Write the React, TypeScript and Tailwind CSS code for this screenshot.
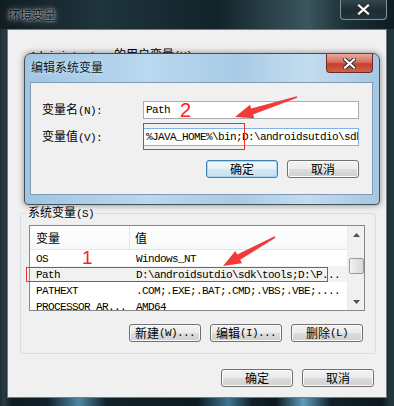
import React from "react";

// CJK runs get Noto Sans CJK at 12px, latin runs a narrow mono (6px per char, like SimSun)
function T({ s }: { s: string }) {
  const parts = s.split(/([\u3000-\u9fff]+)/);
  return (
    <>
      {parts.map((p, i) =>
        p === "" ? null : /[\u3000-\u9fff]/.test(p) ? (
          <span key={i} className="[font-family:'Noto_Sans_CJK_SC',sans-serif] text-[12px] leading-[12px]">
            {p}
          </span>
        ) : (
          <span key={i} className="[font-family:'Liberation_Mono',monospace] text-[11px] leading-[12px] tracking-[-0.6px] whitespace-pre">
            {p}
          </span>
        )
      )}
    </>
  );
}

function Btn({ label, def = false }: { label: string; def?: boolean }) {
  return (
    <div
      className={
        def
          ? "h-[18px] w-[72px] rounded-[3px] border border-[#3c7fb1] bg-[linear-gradient(#f1f8fd_0%,#e6f1f9_50%,#d6e7f4_50%,#cadeee_100%)] shadow-[inset_0_0_0_1px_#a5d5f2] flex items-center justify-center text-black"
          : "h-[18px] w-[72px] rounded-[3px] border border-[#707070] bg-[linear-gradient(#f2f2f2_0%,#ebebeb_50%,#dddddd_50%,#cfcfcf_100%)] shadow-[inset_0_0_0_1px_#fbfbfb] flex items-center justify-center text-black"
      }
    >
      <T s={label} />
    </div>
  );
}

function CloseX() {
  return (
    <svg width="13" height="11" viewBox="0 0 13 11">
      <path d="M2 1.5 L11 9.5 M11 1.5 L2 9.5" stroke="#2a2a2a" strokeWidth="4" strokeLinecap="square" />
      <path d="M2 1.5 L11 9.5 M11 1.5 L2 9.5" stroke="#ffffff" strokeWidth="2.2" strokeLinecap="square" />
    </svg>
  );
}

const rows = [
  { k: "OS", v: "Windows_NT" },
  { k: "Path", v: "D:\\androidsutdio\\sdk\\tools;D:\\P...", sel: true },
  { k: "PATHEXT", v: ".COM;.EXE;.BAT;.CMD;.VBS;.VBE;...." },
  { k: "PROCESSOR_AR...", v: "AMD64" },
];

export default function App() {
  return (
    <div className="w-[394px] h-[406px] relative overflow-hidden flex flex-col text-[12px] leading-[12px] bg-[linear-gradient(90deg,#1c2b31_0%,#2a3d44_1%,#0f1c21_3%,#10202a_12%,#4f86a3_20%,#122129_27%,#0d1a20_50%,#3f7490_58%,#11212a_64%,#0c181d_70%,#5e9cbb_77%,#122129_84%,#0d191e_97%,#24363d_99%)] text-black">
      {/* 外层窗口标题栏 */}
      <div className="h-[29px] shrink-0 flex justify-between pr-[7px] bg-[linear-gradient(90deg,#101d23,#1f343c_25%,#13232a_55%,#3b565e_78%,#1c2f36_88%,#0f1c21)]">
        <div className="pl-[8px] pt-[9px] text-[#0c0c0c] [text-shadow:0_0_2px_#dce9ed,0_0_6px_#b4c9d0]">
          <T s="环境变量" />
        </div>
        <div className="w-[47px] h-[20px] rounded-b-[4px] border border-t-0 border-[#7f9298] bg-[linear-gradient(#33464d,#1c2c32_55%,#22353b)] flex items-center justify-center">
          <CloseX />
        </div>
      </div>

      {/* 外层客户区 */}
      <div className="flex-1 mx-[7px] mb-[8px] bg-[#f0f0f0] border border-[#6c7f86] flex flex-col">
        <div className="pt-[18px] pl-[22px] h-[30px]">
          <T s="Administrator 的用户变量(U)" />
        </div>
        <div className="h-[146px]" />

        <fieldset className="ml-[12px] w-[356px] border border-[#d5dfe5] rounded-[3px] px-[8px] pb-[11px]">
          <legend className="-ml-[2px] px-[1px] leading-[12px]">
            <T s="系统变量(S)" />
          </legend>

          <div className="mt-[5px] w-[336px] h-[86px] border border-[#828790] bg-white flex overflow-hidden">
            <div className="flex-1 flex flex-col">
              <div className="h-[24px] shrink-0 flex border-b border-[#e5e5e5] bg-[linear-gradient(#ffffff,#f7f8fa)]">
                <div className="w-[100px] border-r border-[#e5e5e5] pl-[6px] flex items-center">
                  <T s="变量" />
                </div>
                <div className="flex-1 pl-[5px] flex items-center">
                  <T s="值" />
                </div>
              </div>
              <div className="flex flex-col">
                {rows.map((r) => (
                  <div key={r.k} className={r.sel ? "h-[16px] shrink-0 flex items-center bg-[#f2f2f2]" : "h-[16px] shrink-0 flex items-center"}>
                    <div className="w-[100px] pl-[6px] overflow-hidden whitespace-nowrap">
                      <T s={r.k} />
                    </div>
                    <div className="flex-1 pl-[6px] overflow-hidden whitespace-nowrap">
                      <T s={r.v} />
                    </div>
                  </div>
                ))}
              </div>
            </div>
            {/* 滚动条 */}
            <div className="w-[17px] shrink-0 bg-[#f0f0f0] border-l border-[#ececec] flex flex-col items-center">
              <div className="h-[17px] flex items-center justify-center">
                <svg width="7" height="4" viewBox="0 0 7 4"><path d="M3.5 0 L7 4 L0 4 Z" fill="#505050" /></svg>
              </div>
              <div className="mt-[15px] w-[15px] h-[16px] rounded-[2px] border border-[#9a9a9a] bg-[linear-gradient(90deg,#f3f3f3,#e4e4e4_50%,#d8d8d8)]" />
              <div className="flex-1" />
              <div className="h-[17px] flex items-center justify-center">
                <svg width="7" height="4" viewBox="0 0 7 4"><path d="M0 0 L7 0 L3.5 4 Z" fill="#505050" /></svg>
              </div>
            </div>
          </div>

          <div className="mt-[13px] flex justify-end gap-[9px] pr-[4px]">
            <Btn label="新建(W)..." />
            <Btn label="编辑(I)..." />
            <Btn label="删除(L)" />
          </div>
        </fieldset>

        <div className="mt-[15px] flex justify-end gap-[9px] pr-[12px]">
          <Btn label="确定" />
          <Btn label="取消" />
        </div>
      </div>

      {/* 编辑系统变量 对话框 */}
      <div className="absolute left-[24px] top-[53px] w-[356px] h-[152px] rounded-t-[7px] rounded-b-[4px] border border-[#3f505c] bg-[linear-gradient(90deg,#9fc5e3,#bad8ef_35%,#a9cbe6_60%,#c3dcef_80%,#a4c7e3)] shadow-[0_0_6px_rgba(0,0,0,0.45)] flex flex-col">
        <div className="h-[28px] shrink-0 flex justify-between pr-[6px]">
          <div className="pl-[6px] pt-[7px] text-[#101820] [text-shadow:0_0_6px_#e6f2fb]">
            <T s="编辑系统变量" />
          </div>
          <div className="w-[47px] h-[19px] rounded-b-[4px] border border-t-0 border-[#6b2a22] bg-[linear-gradient(#eaa89c,#d7715f_45%,#c2412c_55%,#d0604a)] flex items-center justify-center">
            <CloseX />
          </div>
        </div>
        <div className="flex-1 ml-[5px] mr-[6px] mb-[9px] bg-[#f0f0f0] border border-[#7f9bb3] flex flex-col pt-[18px] pl-[11px] pr-[13px]">
          <div className="flex items-center">
            <div className="w-[102px]">
              <T s="变量名(N):" />
            </div>
            <div className="h-[18px] w-[218px] border border-[#abadb3] bg-white flex items-center pl-[2px] whitespace-nowrap">
              <T s="Path" />
              <span className="ml-[10px] [font-family:'Liberation_Sans',sans-serif] text-[20px] leading-[14px] text-[#ff2020]">2</span>
            </div>
          </div>
          <div className="mt-[9px] flex items-center">
            <div className="w-[102px]">
              <T s="变量值(V):" />
            </div>
            <div className="h-[18px] w-[218px] border border-[#7eb4ea] bg-white flex items-center pl-[2px] overflow-hidden whitespace-nowrap">
              <T s="%JAVA_HOME%\bin;D:\androidsutdio\sdk\tools;D:\Program Files" />
            </div>
          </div>
          <div className="mt-[14px] flex justify-end gap-[9px]">
            <Btn label="确定" def />
            <Btn label="取消" />
          </div>
        </div>
      </div>

      {/* 红色标注 */}
      <span className="absolute left-[82px] top-[251px] [font-family:'Liberation_Sans',sans-serif] text-[19px] leading-[14px] text-[#ff2020]">1</span>
      <svg className="absolute inset-0 pointer-events-none" width="394" height="406" viewBox="0 0 394 406">
        <rect x="143.5" y="123.5" width="101" height="26" fill="none" stroke="#ec3030" strokeWidth="1" />
        <rect x="26.5" y="267.5" width="301" height="14" fill="none" stroke="#ec3030" strokeWidth="1" />
        <polygon points="235,117 250,104.8 251.2,108.6 296.8,96.2 297.2,97.8 253,114.4 254.3,118.2" fill="#f23a3a" />
        <polygon points="223,266 235.3,251.1 237.2,254.6 274.6,236.3 275.4,237.7 240.2,259.8 242.1,263.3" fill="#f23a3a" />
      </svg>
    </div>
  );
}
